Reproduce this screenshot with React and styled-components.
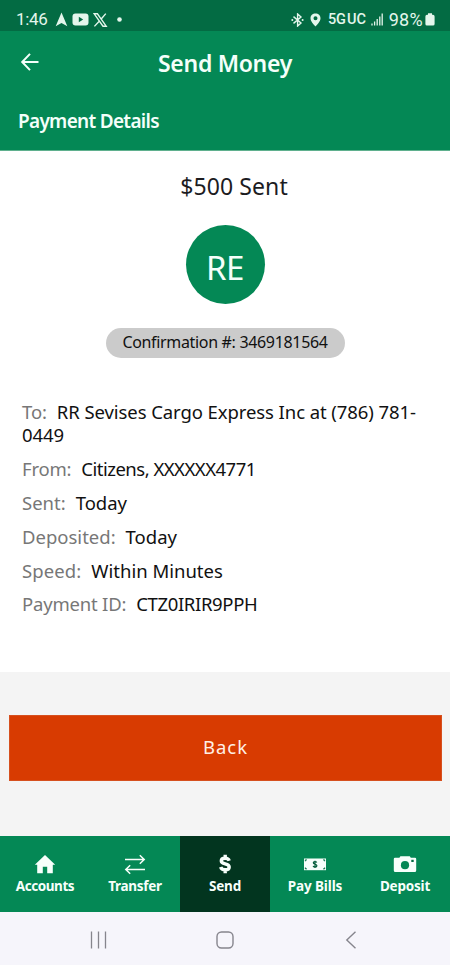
import React from "react";
import styled, { createGlobalStyle } from "styled-components";

const GlobalStyle = createGlobalStyle`
  * {
    box-sizing: border-box;
  }
  body {
    margin: 0;
    background: #fff;
    font-family: "Noto Sans", "Open Sans", sans-serif;
  }
`;

const Screen = styled.div`
  width: 450px;
  height: 965px;
  display: flex;
  flex-direction: column;
  overflow: hidden;
  background: #fff;
`;

const StatusBar = styled.div`
  height: 31px;
  padding: 8px 15px 0 16px;
  display: flex;
  justify-content: space-between;
  background: #036b43;
  color: #e4f6ec;
  font-family: Roboto, sans-serif;
`;

const StatusGroup = styled.div`
  height: 23px;
  display: flex;
  align-items: center;
`;

const StatusIcon = styled.svg`
  display: block;
  flex: none;
  margin-left: ${props => props.$gap || 0}px;
`;

const StatusText = styled.span`
  font-size: ${props => props.$size}px;
  line-height: 23px;
  letter-spacing: ${props => props.$track || 0}px;
  word-spacing: ${props => props.$word || 0}px;
  font-weight: ${props => props.$weight || 400};
  margin-left: ${props => props.$gap || 0}px;
  white-space: nowrap;
`;

const Header = styled.header`
  height: 120px;
  background: #048855;
  border-bottom: 1px solid #5fb08e;
  color: #f4fffa;
`;

const TitleRow = styled.div`
  height: 64px;
  display: grid;
  grid-template-columns: 60px 1fr 60px;
  align-items: center;
`;

const BackArrow = styled.button`
  display: flex;
  padding: 0 0 3px 20px;
  border: none;
  background: none;
  color: inherit;
`;

const Title = styled.h1`
  margin: 0;
  text-align: center;
  font-size: 23px;
  font-weight: 600;
  line-height: 64px;
  letter-spacing: -0.3px;
`;

const SubTitle = styled.h2`
  margin: 0;
  padding-left: 18px;
  font-size: 19px;
  font-weight: 600;
  line-height: 53px;
  letter-spacing: -0.7px;
`;

const Summary = styled.section`
  height: 249px;
  padding-top: 19px;
  display: flex;
  flex-direction: column;
  align-items: center;
`;

const Amount = styled.div`
  margin-left: 18px;
  font-size: 23px;
  line-height: 32px;
  letter-spacing: 0.1px;
  color: #1c1c1f;
`;

const Avatar = styled.div`
  width: 79px;
  height: 79px;
  margin-top: 23px;
  padding-top: 6px;
  border-radius: 50%;
  display: flex;
  align-items: center;
  justify-content: center;
  background: #048855;
  color: #f4fffa;
  font-size: 33px;
  letter-spacing: -0.5px;
`;

const Confirmation = styled.div`
  width: 239px;
  height: 30px;
  margin-top: 24px;
  border-radius: 15px;
  background: #cbcbcb;
  color: #111;
  font-size: 16px;
  line-height: 29px;
  text-align: center;
  letter-spacing: -0.33px;
  white-space: nowrap;
`;

const Details = styled.dl`
  height: 272px;
  margin: 0;
  padding: 0 22px;
  display: flex;
  flex-direction: column;
  gap: 10.9px;
  font-size: 18.5px;
  line-height: 23px;
`;

const DetailRow = styled.div`
  letter-spacing: ${props => props.$track}px;
`;

const Label = styled.dt`
  display: inline;
  margin-right: 10px;
  color: #777;
`;

const Value = styled.dd`
  display: inline;
  margin: 0;
  color: #111;
  letter-spacing: ${props => props.$track}px;
`;

const Actions = styled.div`
  height: 164px;
  padding: 43px 8px 0 9px;
  background: #f4f4f4;
`;

const BackButton = styled.button`
  display: block;
  width: 100%;
  height: 66px;
  padding: 0 0 3px;
  border: 1px solid #d6501f;
  border-radius: 0;
  background: #d83b01;
  color: #fff0e6;
  font-family: inherit;
  font-size: 18.5px;
  letter-spacing: 1px;
`;

const TabBar = styled.nav`
  height: 76px;
  display: grid;
  grid-template-columns: repeat(5, 1fr);
  background: #048855;
`;

const Tab = styled.div`
  padding-top: 17px;
  display: flex;
  flex-direction: column;
  align-items: center;
  background: ${props => (props.$active ? "#02351f" : "transparent")};
  color: #f7fffb;
`;

const TabLabel = styled.span`
  margin-top: 1px;
  font-size: 13.5px;
  font-weight: 700;
  line-height: 20px;
  letter-spacing: ${props => props.$track}px;
`;

const SystemNav = styled.div`
  height: 53px;
  display: flex;
  align-items: center;
  justify-content: space-between;
  padding: 2px 93px 0 90px;
  background: #f6f5fb;
`;

const HomeButton = styled.svg`
  margin-right: 4px;
`;

const HomeIcon = () => (
  <svg width="22" height="22" viewBox="0 0 22 22">
    <path
      d="M11 2 L21.2 11.7 H18.8 V20.3 H13.2 V13.8 H8.8 V20.3 H3.2 V11.7 H.8 Z"
      fill="currentColor"
    />
  </svg>
);

const TransferIcon = () => (
  <svg width="22" height="22" viewBox="0 0 22 22">
    <path
      d="M1 6.5 H20 M15.8 2.3 L20.2 6.5 L15.8 10.7 M21 16.5 H2 M6.2 12.3 L1.8 16.5 L6.2 20.7"
      fill="none"
      stroke="currentColor"
      strokeWidth="1.5"
    />
  </svg>
);

const DollarIcon = () => (
  <svg width="22" height="22" viewBox="0 0 22 22">
    <path
      d="M15.2 7.8 C14.6 6 13 5.3 11 5.3 C8.7 5.3 7.3 6.2 7.3 7.9 C7.3 11.8 15.2 9.8 15.2 13.9 C15.2 15.9 13.4 16.8 11.1 16.8 C8.7 16.8 7.2 15.9 6.7 14 M11.2 1.8 V5.5 M11.2 16.6 V20.2"
      fill="none"
      stroke="currentColor"
      strokeWidth="3.4"
    />
  </svg>
);

const BillIcon = () => (
  <svg width="24" height="22" viewBox="0 0 24 22">
    <rect x="1" y="5.5" width="22" height="11.7" fill="currentColor" />
    <path
      d="M2.2 8.2 V6.8 H3.8 Z M21.8 8.2 V6.8 H20.2 Z M2.2 14.6 V16 H3.8 Z M21.8 14.6 V16 H20.2 Z"
      fill="#036b43"
      stroke="#036b43"
      strokeWidth=".5"
    />
    <path
      d="M13.8 9.5 C13.4 8.8 12.8 8.6 12 8.6 C11 8.6 10.3 9 10.3 9.8 C10.3 11.7 13.9 10.8 13.9 12.8 C13.9 13.7 13 14.1 12 14.1 C11 14.1 10.3 13.7 10.1 12.9 M12 7.8 V15"
      fill="none"
      stroke="#035d3a"
      strokeWidth="1.2"
    />
  </svg>
);

const CameraIcon = () => (
  <svg width="24" height="22" viewBox="0 0 24 22">
    <path
      d="M2 4.8 H6.4 L7.4 3.2 H16.8 L17.8 4.8 H22 Q23.2 4.8 23.2 6 V17.6 Q23.2 19.1 21.7 19.1 H2.3 Q.8 19.1 .8 17.6 V6 Q.8 4.8 2 4.8 Z"
      fill="currentColor"
    />
    <circle cx="12" cy="12.2" r="4.1" fill="#048855" />
    <rect x="18.3" y="6.8" width="2.4" height="2.2" fill="#036b43" />
  </svg>
);

const details = [
  { label: "To:", value: "RR Sevises Cargo Express Inc at (786) 781-0449", labelTrack: -0.1, track: -0.08 },
  { label: "From:", value: "Citizens, XXXXXX4771", labelTrack: -0.2, track: -0.5 },
  { label: "Sent:", value: "Today", labelTrack: 0, track: 0 },
  { label: "Deposited:", value: "Today", labelTrack: 0, track: 0 },
  { label: "Speed:", value: "Within Minutes", labelTrack: 0.1, track: 0 },
  { label: "Payment ID:", value: "CTZ0IRIR9PPH", labelTrack: -0.2, track: -0.35 }
];

const tabs = [
  { label: "Accounts", icon: HomeIcon, track: -0.45 },
  { label: "Transfer", icon: TransferIcon, track: -0.3 },
  { label: "Send", icon: DollarIcon, track: -0.2, active: true },
  { label: "Pay Bills", icon: BillIcon, track: -0.1 },
  { label: "Deposit", icon: CameraIcon, track: -0.2 }
];

function App() {
  return (
    <Screen>
      <GlobalStyle />
      <StatusBar>
        <StatusGroup>
          <StatusText $size={17} $track={-0.3}>1:46</StatusText>
          <StatusIcon $gap={7} width="13" height="15" viewBox="0 0 13 15">
            <path d="M6.5 .5 L12.3 14.3 L6.5 11 L.7 14.3 Z" fill="currentColor" />
          </StatusIcon>
          <StatusIcon $gap={4} width="17" height="13" viewBox="0 0 17 13">
            <rect x=".5" y=".5" width="16" height="12" rx="3" fill="currentColor" />
            <path d="M6.8 3.8 L11.2 6.5 L6.8 9.2 Z" fill="#036b43" />
          </StatusIcon>
          <StatusIcon $gap={4} width="15" height="14" viewBox="0 0 15 14">
            <path
              d="M1.2 .8 H4.4 L13.2 13.2 H10 Z M12.8 .6 L8.2 6 M6.2 8.2 L1.4 13.4"
              fill="none"
              stroke="currentColor"
              strokeWidth="1.4"
            />
          </StatusIcon>
          <StatusIcon $gap={9} width="5" height="5" viewBox="0 0 5 5">
            <circle cx="2.5" cy="2.5" r="2.3" fill="currentColor" />
          </StatusIcon>
        </StatusGroup>
        <StatusGroup>
          <StatusIcon width="13" height="14" viewBox="0 0 13 14">
            <path
              d="M2.5 3.6 L10 10 L6.6 13 V1 L10 4 L2.5 10.4"
              fill="none"
              stroke="currentColor"
              strokeWidth="1.4"
            />
            <circle cx="1.3" cy="7" r="1" fill="currentColor" />
            <circle cx="11.6" cy="7" r="1" fill="currentColor" />
          </StatusIcon>
          <StatusIcon $gap={6} width="11" height="14" viewBox="0 0 11 14">
            <path
              fillRule="evenodd"
              d="M5.5 .5 C8.4 .5 10.5 2.6 10.5 5.2 C10.5 8.6 7 11.4 5.5 13.6 C4 11.4 .5 8.6 .5 5.2 C.5 2.6 2.6 .5 5.5 .5 Z M5.5 3.2 A2 2 0 1 0 5.5 7.2 A2 2 0 1 0 5.5 3.2 Z"
              fill="currentColor"
            />
          </StatusIcon>
          <StatusText $size={14.5} $gap={6.5} $weight={500} $track={-0.2} $word={-2}>
            5G UC
          </StatusText>
          <StatusIcon $gap={5} width="12" height="13" viewBox="0 0 12 13">
            <path
              d="M1 12.5 V10.5 M3.6 12.5 V8.5 M6.2 12.5 V6 M8.8 12.5 V3.5 M11.2 12.5 V.5"
              stroke="currentColor"
              strokeWidth="1.3"
            />
          </StatusIcon>
          <StatusText $size={18} $gap={6} $track={0.3}>98%</StatusText>
          <StatusIcon $gap={2} width="10" height="13" viewBox="0 0 10 13">
            <path
              d="M3 .3 H7 V1.8 H8 Q9.6 1.8 9.6 3.4 V11 Q9.6 12.6 8 12.6 H2 Q.4 12.6 .4 11 V3.4 Q.4 1.8 2 1.8 H3 Z"
              fill="currentColor"
            />
          </StatusIcon>
        </StatusGroup>
      </StatusBar>

      <Header>
        <TitleRow>
          <BackArrow aria-label="Back">
            <svg width="20" height="20" viewBox="0 0 20 20">
              <path
                d="M18.5 10 H2.6 M10 1.9 L2.2 10 L10 18.1"
                fill="none"
                stroke="currentColor"
                strokeWidth="2"
              />
            </svg>
          </BackArrow>
          <Title>Send Money</Title>
        </TitleRow>
        <SubTitle>Payment Details</SubTitle>
      </Header>

      <Summary>
        <Amount>$500 Sent</Amount>
        <Avatar>RE</Avatar>
        <Confirmation>Confirmation #: 3469181564</Confirmation>
      </Summary>

      <Details>
        {details.map(row => (
          <DetailRow key={row.label} $track={row.labelTrack}>
            <Label>{row.label}</Label>
            <Value $track={row.track}>{row.value}</Value>
          </DetailRow>
        ))}
      </Details>

      <Actions>
        <BackButton type="button">Back</BackButton>
      </Actions>

      <TabBar>
        {tabs.map(({ label, icon: Icon, track, active }) => (
          <Tab key={label} $active={active}>
            <Icon />
            <TabLabel $track={track}>{label}</TabLabel>
          </Tab>
        ))}
      </TabBar>

      <SystemNav>
        <svg width="18" height="18" viewBox="0 0 18 18">
          <path d="M1.5 .5 V17.5 M8.5 .5 V17.5 M15.5 .5 V17.5" stroke="#86858d" strokeWidth="1.3" />
        </svg>
        <HomeButton width="18" height="18" viewBox="0 0 18 18">
          <rect
            x="1"
            y="1"
            width="16"
            height="16"
            rx="4.5"
            fill="none"
            stroke="#86858d"
            strokeWidth="1.4"
          />
        </HomeButton>
        <svg width="12" height="18" viewBox="0 0 12 18">
          <path d="M10.5 .8 L1.8 9 L10.5 17.2" fill="none" stroke="#86858d" strokeWidth="1.4" />
        </svg>
      </SystemNav>
    </Screen>
  );
}

export default App;
